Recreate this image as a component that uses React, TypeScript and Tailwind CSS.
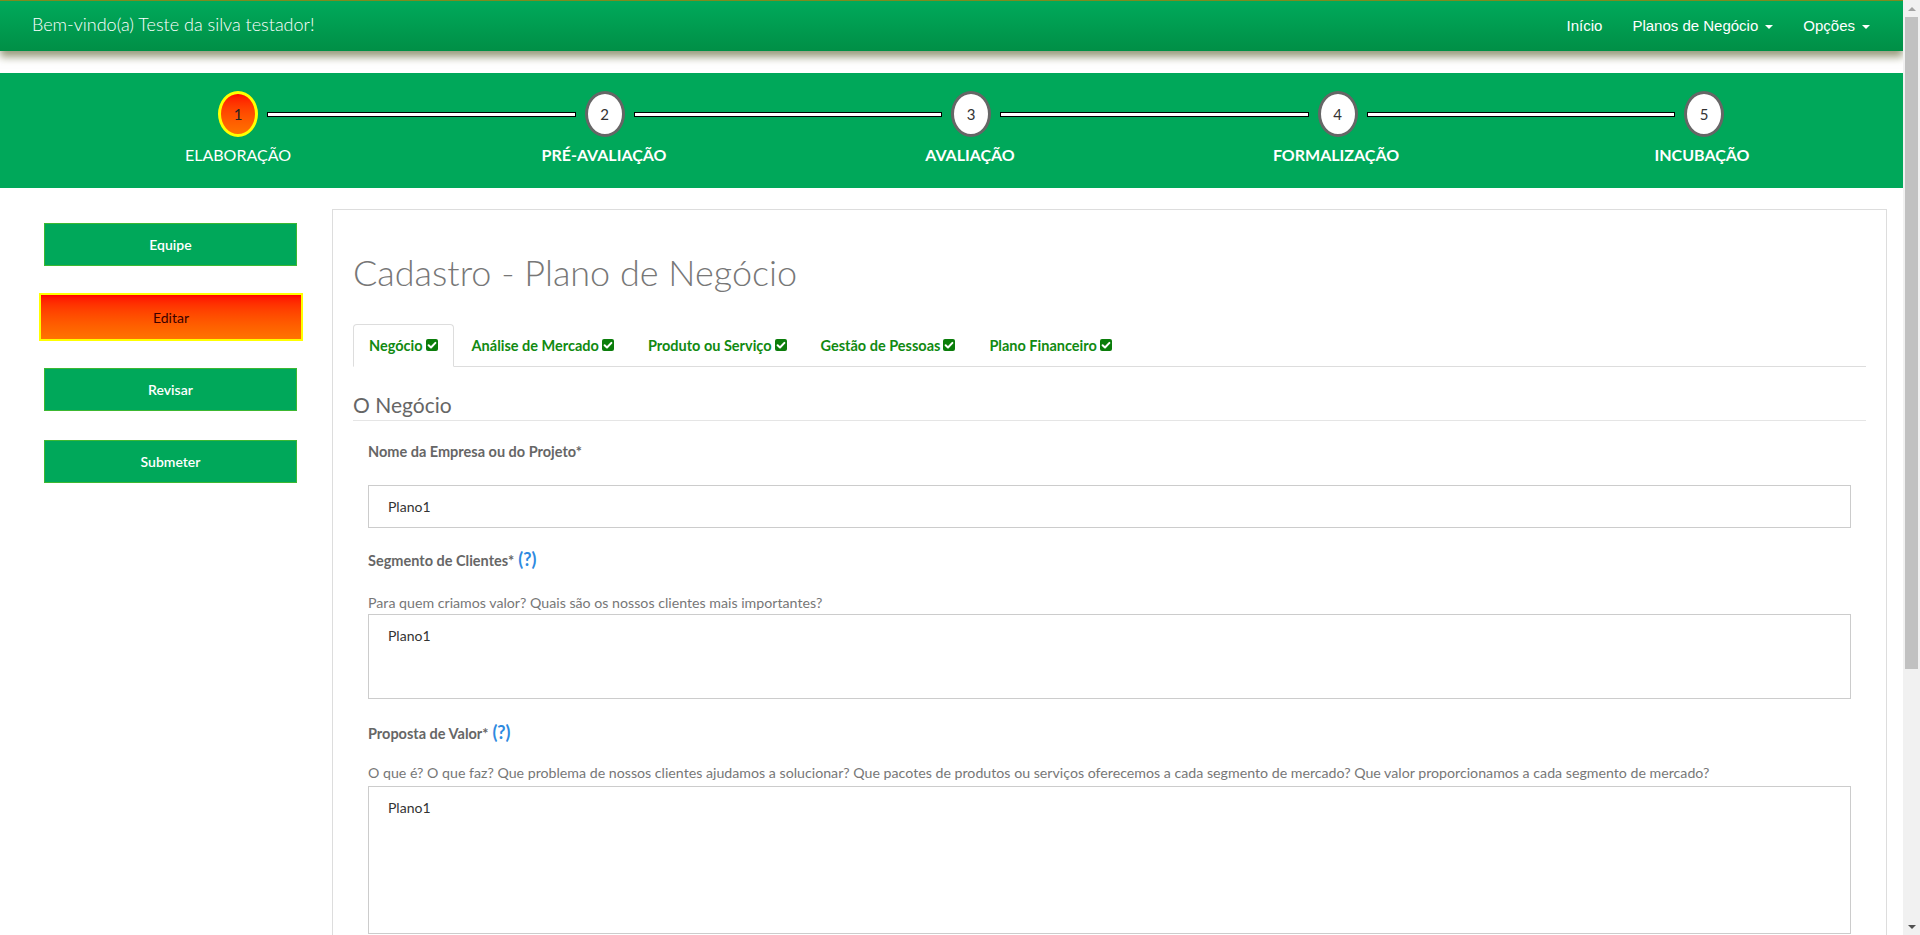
import React from 'react';

const font = { fontFamily: 'Lato, "Open Sans", sans-serif' };

function CheckSquare() {
  return (
    <svg width="12" height="12" viewBox="0 0 12 12" className="inline-block ml-[3px] -mt-[2px]">
      <rect x="0" y="0" width="12" height="12" rx="2" fill="#0b7d0b" />
      <path d="M2.6 6.2 L5 8.5 L9.4 3.9" stroke="#fff" strokeWidth="2" fill="none" strokeLinecap="round" strokeLinejoin="round" />
    </svg>
  );
}

function Caret() {
  return <span className="inline-block ml-[7px] align-middle w-0 h-0 border-x-[4px] border-x-transparent border-t-[4px] border-t-white" />;
}

const steps = ['ELABORAÇÃO', 'PRÉ-AVALIAÇÃO', 'AVALIAÇÃO', 'FORMALIZAÇÃO', 'INCUBAÇÃO'];
const tabs = ['Negócio', 'Análise de Mercado', 'Produto ou Serviço', 'Gestão de Pessoas', 'Plano Financeiro'];

function Stepper() {
  return (
    <div className="mt-[22px] h-[115px] bg-[#00a85a] pt-[18px]">
      <div className="flex items-center ml-[218px] w-[1506px]">
        {steps.map((s, i) => (
          <React.Fragment key={s}>
            {i > 0 && <div className="flex-1 mx-[9px] h-[5px] bg-white border border-black" />}
            {i === 0 ? (
              <div className="w-[40px] h-[46px] rounded-[50%] border-[3px] border-[#ffff00] bg-gradient-to-b from-[#ff0000] to-[#ff7200] flex items-center justify-center text-[15px] text-[#222]">
                1
              </div>
            ) : (
              <div className="w-[40px] h-[46px] rounded-[50%] border-[3px] border-[#666] bg-white flex items-center justify-center text-[15px] text-[#333]">
                {i + 1}
              </div>
            )}
          </React.Fragment>
        ))}
      </div>
      <div className="flex ml-[55px] mt-[8px]">
        {steps.map((s, i) => (
          <div key={s} className={`w-[366px] text-center text-white text-[16px] leading-[20px] ${i === 0 ? 'font-normal' : 'font-bold'}`}>
            {s}
          </div>
        ))}
      </div>
    </div>
  );
}

function SideButton({ label, active }: { label: string; active?: boolean }) {
  if (active) {
    return (
      <button className="-ml-[5px] -my-[2px] w-[264px] h-[48px] border-2 border-[#ffff00] bg-gradient-to-b from-[#ff0000] to-[#ff7400] text-[#3a0000] text-[14px]">
        {label}
      </button>
    );
  }
  return (
    <button className="w-[253px] h-[43px] border border-[#3cb832] bg-[#00a85a] text-white text-[14px] font-semibold">
      {label}
    </button>
  );
}

function Help() {
  return <span className="text-[#2f8ae0] font-bold text-[18px] ml-[4px]">(?)</span>;
}

function ScrollTrack() {
  return (
    <div className="w-[17px] shrink-0 bg-[#f1f1f1] flex flex-col">
      <div className="h-[17px] flex items-center justify-center">
        <span className="w-0 h-0 border-x-[4px] border-x-transparent border-b-[4px] border-b-[#a3a3a3]" />
      </div>
      <div className="mx-[2px] h-[652px] bg-[#c1c1c1]" />
      <div className="flex-1" />
      <div className="h-[17px] flex items-center justify-center">
        <span className="w-0 h-0 border-x-[4px] border-x-transparent border-t-[4px] border-t-[#505050]" />
      </div>
    </div>
  );
}

export default function App() {
  return (
    <div className="flex h-screen bg-white" style={font}>
      <div className="flex-1 min-w-0 overflow-y-auto">
        <div className="relative z-10 h-[51px] border-t border-[#7f8a1f] bg-gradient-to-b from-[#00aa5b] to-[#008f46] shadow-[0_6px_8px_rgba(70,75,20,0.55)] flex items-center justify-between pl-[32px] pr-[18px]">
          <div className="text-white text-[18px] font-light -mt-[4px]">Bem-vindo(a) Teste da silva testador!</div>
          <div className="flex text-white text-[15px]" style={{ fontFamily: '"Liberation Sans", Arial, sans-serif' }}>
            <span className="px-[15px]">Início</span>
            <span className="px-[15px]">Planos de Negócio<Caret /></span>
            <span className="px-[15px]">Opções<Caret /></span>
          </div>
        </div>

        <Stepper />

        <div className="flex mt-[21px] pb-[20px]">
          <div className="w-[317px] shrink-0 pt-[14px] pl-[44px] flex flex-col items-start gap-[29px]">
            <SideButton label="Equipe" />
            <SideButton label="Editar" active />
            <SideButton label="Revisar" />
            <SideButton label="Submeter" />
          </div>

          <div className="flex-1 ml-[15px] mr-[16px] border border-[#ddd] min-h-[1063px] px-[20px] pt-[42px]">
            <h1 className="text-[36px] leading-[40px] font-light text-[#777]">Cadastro - Plano de Negócio</h1>

            <ul className="flex mt-[32px] border-b border-[#ddd]">
              {tabs.map((t, i) => (
                <li key={t} className="-mb-px mr-[2px]">
                  <a className={`flex items-center h-[43px] px-[15px] text-[14.5px] font-bold text-[#118a11] border rounded-t-[4px] ${i === 0 ? 'border-[#ddd] border-b-white bg-white' : 'border-transparent'}`}>
                    {t}
                    <CheckSquare />
                  </a>
                </li>
              ))}
            </ul>

            <h3 className="mt-[23px] text-[21px] leading-[30px] text-[#666] border-b border-[#e5e5e5]">O Negócio</h3>

            <div className="px-[15px]">
              <label className="block mt-[21px] text-[14.5px] leading-[20px] font-bold text-[#666]">Nome da Empresa ou do Projeto*</label>
              <div className="mt-[23px] h-[43px] border border-[#ccc] flex items-center pl-[19px] text-[14px] text-[#333]">Plano1</div>

              <label className="block mt-[21px] text-[14.5px] leading-[20px] font-bold text-[#666]">
                Segmento de Clientes*<Help />
              </label>
              <p className="mt-[23px] text-[14.2px] leading-[18px] text-[#777]">Para quem criamos valor? Quais são os nossos clientes mais importantes?</p>
              <div className="mt-[2px] h-[85px] border border-[#ccc] pl-[19px] pt-[10px] text-[14px] text-[#333]">Plano1</div>

              <label className="block mt-[23px] text-[14.5px] leading-[20px] font-bold text-[#666]">
                Proposta de Valor*<Help />
              </label>
              <p className="mt-[20px] text-[14.2px] leading-[18px] text-[#777]">
                O que é? O que faz? Que problema de nossos clientes ajudamos a solucionar? Que pacotes de produtos ou serviços oferecemos a cada segmento de mercado? Que valor proporcionamos a cada segmento de mercado?
              </p>
              <div className="mt-[4px] h-[148px] border border-[#ccc] pl-[19px] pt-[10px] text-[14px] text-[#333]">Plano1</div>
            </div>
          </div>
        </div>
      </div>
      <ScrollTrack />
    </div>
  );
}
